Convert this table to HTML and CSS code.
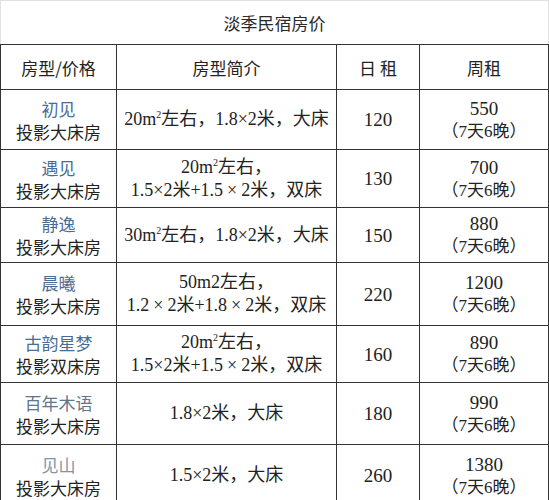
FILE: index.html
```html
<!DOCTYPE html>
<html lang="zh-CN">
<head>
<meta charset="utf-8">
<title>淡季民宿房价</title>
<link rel="stylesheet" href="styles.css">
</head>
<body>
<div class="sheet">
  <div class="title">淡季民宿房价</div>
  <div class="grid">
    <div class="cell head">房型/价格</div>
    <div class="cell head">房型简介</div>
    <div class="cell head">日 租</div>
    <div class="cell head">周租</div>

    <div class="cell room"><span class="name">初见</span><span>投影大床房</span></div>
    <div class="cell desc"><span>20m<sup class="sq">2</sup>左右，1.8×2米，大床</span></div>
    <div class="cell num">120</div>
    <div class="cell week"><span class="num">550</span><span>（7天6晚）</span></div>

    <div class="cell room"><span class="name">遇见</span><span>投影大床房</span></div>
    <div class="cell desc"><span>20m<sup class="sq">2</sup>左右，</span><span>1.5×2米+1.5<span class="wx">×</span>2米，双床</span></div>
    <div class="cell num">130</div>
    <div class="cell week"><span class="num">700</span><span>（7天6晚）</span></div>

    <div class="cell room"><span class="name">静逸</span><span>投影大床房</span></div>
    <div class="cell desc"><span>30m<sup class="sq">2</sup>左右，1.8×2米，大床</span></div>
    <div class="cell num">150</div>
    <div class="cell week"><span class="num">880</span><span>（7天6晚）</span></div>

    <div class="cell room"><span class="name">晨曦</span><span>投影大床房</span></div>
    <div class="cell desc"><span>50m2左右，</span><span>1.2<span class="wx">×</span>2米+1.8<span class="wx">×</span>2米，双床</span></div>
    <div class="cell num">220</div>
    <div class="cell week"><span class="num">1200</span><span>（7天6晚）</span></div>

    <div class="cell room"><span class="name">古韵星梦</span><span>投影双床房</span></div>
    <div class="cell desc"><span>20m<sup class="sq">2</sup>左右，</span><span>1.5×2米+1.5<span class="wx">×</span>2米，双床</span></div>
    <div class="cell num">160</div>
    <div class="cell week"><span class="num">890</span><span>（7天6晚）</span></div>

    <div class="cell room"><span class="name faded">百年木语</span><span>投影大床房</span></div>
    <div class="cell desc"><span>1.8×2米，大床</span></div>
    <div class="cell num">180</div>
    <div class="cell week"><span class="num">990</span><span>（7天6晚）</span></div>

    <div class="cell room"><span class="name pale">见山</span><span>投影大床房</span></div>
    <div class="cell desc"><span>1.5×2米，大床</span></div>
    <div class="cell num">260</div>
    <div class="cell week"><span class="num">1380</span><span>（7天6晚）</span></div>
  </div>
</div>
</body>
</html>
```
FILE: styles.css
```css
html, body {
  margin: 0;
  padding: 0;
  background: #ffffff;
}

.sheet {
  width: 549px;
  color: #1e1e1e;
  font-family: "Liberation Serif", "Noto Sans CJK SC", serif;
}

.title {
  height: 44px;
  box-sizing: border-box;
  border: 1px solid #e2e2e2;
  border-bottom: none;
  display: flex;
  align-items: center;
  justify-content: center;
  font-family: "Noto Sans CJK SC", sans-serif;
  font-size: 17px;
  color: #2a2a2a;
}

.grid {
  display: grid;
  grid-template-columns: 116px 220px 83px 129px;
  grid-template-rows: 45px 60px 58px 55px 63px 57px 62px 62px;
  border-top: 1px solid #333;
  border-left: 1px solid #333;
}

.cell {
  box-sizing: border-box;
  border-right: 1px solid #333;
  border-bottom: 1px solid #333;
  display: flex;
  flex-direction: column;
  align-items: center;
  justify-content: center;
  text-align: center;
  line-height: 23px;
  white-space: nowrap;
  text-spacing-trim: space-all;
}

.head {
  font-family: "Noto Sans CJK SC", sans-serif;
  font-size: 17px;
  color: #222;
}

.room {
  font-family: "Noto Sans CJK SC", sans-serif;
  font-size: 17px;
  color: #222;
}

.name {
  color: #4a6c94;
}

.name.faded {
  color: #627589;
}

.name.pale {
  color: #8194a8;
}

.desc {
  font-size: 18px;
  color: #222;
}

.sq {
  font-size: 10px;
  line-height: 0;
  vertical-align: 7px;
}

.wx {
  margin: 0 4px;
}

.num {
  font-size: 19px;
  color: #222;
}

.week {
  font-size: 17px;
  color: #222;
}
```
